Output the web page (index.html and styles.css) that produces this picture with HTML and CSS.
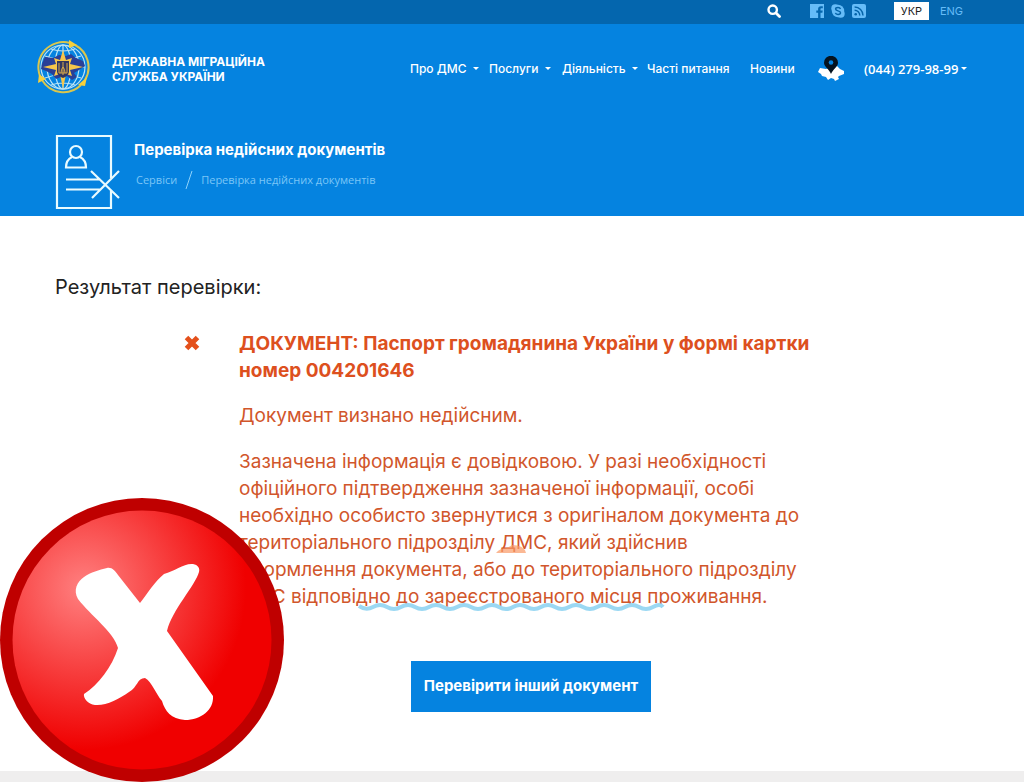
FILE: index.html
```
<!DOCTYPE html>
<html lang="uk">
<head>
    <meta charset="UTF-8">
    <meta name="viewport" content="width=device-width, initial-scale=1.0">
    <title>Перевірка недійсних документів</title>
    <link rel="stylesheet" href="styles.css">
</head>
<body>

    <!-- Top bar -->
    <div class="topbar">
        <button class="search" type="button" aria-label="Пошук">
            <svg width="14" height="14" viewBox="0 0 14 14"><circle cx="5.7" cy="5.7" r="4.2" fill="none" stroke="#fff" stroke-width="2.4"/><path d="M9 9l3.5 3.5" stroke="#fff" stroke-width="2.8" stroke-linecap="round"/></svg>
        </button>
        <div class="social">
            <a href="#" aria-label="Facebook">
                <svg width="14" height="14" viewBox="0 0 14 14"><path d="M0 0h14v14h-3.500V8.700h1.900l.3-2.200h-2.200V5.200c0-.7.300-1 1.100-1h1.200V2.200H11C9 2.200 8.100 3.300 8.100 5v1.500H6.300v2.200h1.800V14H0z" fill="#66bcf8"/></svg>
            </a>
            <a href="#" aria-label="Skype">
                <svg width="14" height="14" viewBox="0 0 14 14"><circle cx="4.300" cy="4.300" r="4" fill="#66bcf8"/><circle cx="9.700" cy="9.700" r="4" fill="#66bcf8"/><circle cx="7" cy="7" r="6.200" fill="#66bcf8"/><path d="M9.500 4.900C9.100 3.800 8.100 3.500 7 3.500c-1.400 0-2.400.6-2.400 1.600C4.600 7.400 9.500 6.300 9.500 8.800c0 1.100-1.100 1.700-2.500 1.700-1.300 0-2.300-.5-2.600-1.600" fill="none" stroke="#0463a8" stroke-width="1.500"/></svg>
            </a>
            <a href="#" aria-label="RSS">
                <svg width="14" height="14" viewBox="0 0 14 14"><rect width="14" height="14" rx="2" fill="#66bcf8"/><circle cx="3.700" cy="10.300" r="1.300" fill="#0463a8"/><path d="M2.600 6.200a5.200 5.200 0 0 1 5.200 5.200M2.600 3a8.400 8.400 0 0 1 8.400 8.400" fill="none" stroke="#0463a8" stroke-width="1.400"/></svg>
            </a>
        </div>
        <div class="lang">
            <a class="active" href="#">УКР</a>
            <a href="#">ENG</a>
        </div>
    </div>

    <!-- Header -->
    <header class="header">
        <div class="header-row">
            <a class="logo" href="#">
                <svg width="54" height="56" viewBox="0 0 54 56">
                    <g fill="none" stroke="#b9e3f5" stroke-width="1.200">
                        <circle cx="27" cy="28" r="22"/>
                        <ellipse cx="27" cy="28" rx="8" ry="22"/>
                        <ellipse cx="27" cy="28" rx="16" ry="22"/>
                        <path d="M27 6v44M5 28h44M9 17q18 7 36 0M9 39q18-7 36 0M15 10q12 4 24 0M15 46q12-4 24 0"/>
                    </g>
                    <path d="M6 25l3-7 8 1 6-3 7 1 5-2 5 4 7 3 2 5-6 4-5 3 3 4-5 3-5-4-6 1-5 2-4-5-6-3-5-2z" fill="#2a3f97"/>
                    <g fill="none" stroke="#d9c64e" stroke-width="2">
                        <path d="M4 37A25 25 0 0 1 34 4"/>
                        <path d="M39 6A25 25 0 0 1 49 41"/>
                        <path d="M45 46A25 25 0 0 1 6 41"/>
                    </g>
                    <path d="M33 1l8 5-8 3zM51 38l-2 9-7-1zM2 44l1-9 7 5z" fill="#f7d03c"/>
                    <path d="M27 11l3 10 6-2-2 6 13 3-13 3 2 6-6-2-3 15-3-15-6 2 2-6-13-3 13-3-2-6 6 2z" fill="#f7c64a"/>
                    <path d="M21 22h12v11q-1 4-6 6-5-2-6-6z" fill="#32355f"/>
                    <path d="M23 24v10h8V24M27 23v13M25 34q0-4 2-6 2 2 2 6" fill="none" stroke="#d9aa4b" stroke-width="1"/>
                </svg>
                <span>ДЕРЖАВНА МІГРАЦІЙНА<br>СЛУЖБА УКРАЇНИ</span>
            </a>
            <nav class="nav">
                <a class="drop" href="#">Про ДМС</a>
                <a class="drop" href="#">Послуги</a>
                <a class="drop" href="#">Діяльність</a>
                <a href="#">Часті питання</a>
                <a href="#">Новини</a>
                <a class="map" href="#" aria-label="Карта">
                    <svg width="26" height="26" viewBox="0 0 26 26"><path d="M0 16l2-4 6 1 5-2 6-1 3 3 4 2v3l-5 2-1 1 1 2-4 2-1-2-3-1-3 2-2-3-4-1-1-2z" fill="#fff"/><path d="M13 18C11 13 6 11 6 6.800a7 7 0 0 1 14 0C20 11 15 13 13 18z" fill="#05131f"/><circle cx="13" cy="6.500" r="2.300" fill="#0583e0"/></svg>
                </a>
                <a class="drop phone" href="#">(044) 279-98-99</a>
            </nav>
        </div>

        <div class="title-row">
            <svg width="66" height="76" viewBox="0 0 66 76" fill="none" stroke="#e9fbff" stroke-width="2.200">
                <path d="M56 44V2H2v72h54V57"/>
                <circle cx="21" cy="18" r="6"/>
                <path d="M17 23c-4 2-6 5-6 10.500h20c0-5.500-2-8.500-6-10.500"/>
                <path d="M11 45.500h34M11 55.500h34M36 37l28 27M64 37L37 64"/>
            </svg>
            <div>
                <h1>Перевірка недійсних документів</h1>
                <div class="crumbs">
                    <a href="#">Сервіси</a>
                    <svg width="8" height="18" viewBox="0 0 8 18"><path d="M7 0L1 18" stroke="#8fd3fb"/></svg>
                    <a href="#">Перевірка недійсних документів</a>
                </div>
            </div>
        </div>
    </header>

    <!-- Result -->
    <main class="content">
        <h2>Результат перевірки:</h2>
        <div class="result">
            <svg class="cross" width="16" height="16" viewBox="0 0 16 16"><path d="M2.500 2.500l11 11M13.500 2.500l-11 11" stroke="#e4501b" stroke-width="5"/></svg>
            <div class="result-text">
                <p class="doc">ДОКУМЕНТ: Паспорт громадянина України у формі картки номер 004201646</p>
                <p>Документ визнано недійсним.</p>
                <div class="note">
                    <p>Зазначена інформація є довідковою. У разі необхідності<br>офіційного підтвердження зазначеної інформації, особі<br>необхідно особисто звернутися з оригіналом документа до<br>територіального підрозділу ДМС, який здійснив<br>оформлення документа, або до територіального підрозділу<br>ДМС відповідно до зареєстрованого місця проживання.</p>
                    <svg class="watermark" width="308" height="76" viewBox="0 0 308 76">
                        <path d="M138 15q4-5 11-5l5-3q12 0 14 8z" fill="#fa9a66" opacity=".7"/>
                        <path d="M1 68q7 5 14 1t14 0 14 0 14 0 14 0 14 0 14 0 14 0 14 0 14 0 14 0 14 0 14 0 14 0 14 0 14 0 14 0 14 0 14 0 14 0 14 0 10 0" fill="none" stroke="#9bd8f3" stroke-width="4"/>
                    </svg>
                </div>
            </div>
        </div>
        <button class="btn" type="button">Перевірити інший документ</button>
    </main>

    <footer class="footer"></footer>

    <!-- Invalid badge -->
    <svg class="badge" width="284" height="284" viewBox="0 0 284 284">
        <defs>
            <radialGradient id="red" cx="84" cy="90" r="162" gradientUnits="userSpaceOnUse">
                <stop offset="0" stop-color="#ff8080"/>
                <stop offset="1" stop-color="#f00000"/>
            </radialGradient>
        </defs>
        <circle cx="142" cy="142" r="142" fill="#bf0000"/>
        <circle cx="142" cy="142" r="129.500" fill="url(#red)"/>
        <path d="M107 70C112 69 115 73 118 77L140 105C147 96 155 83 164 76C175 73 184 65 193 66C198 67 200 70 199 74C195 88 172 112 167 133L213 198C214 212 201 222 185 222C171 221 165 213 162 203C156 196 152 184 145 180C137 180 138 189 129 194C119 201 106 208 95 207C88 206 83 200 84 196C98 187 112 169 118 150C114 134 91 118 78 101C73 92 77 84 84 79C91 74 99 72 107 70Z" fill="#fff"/>
    </svg>

</body>
</html>
```
FILE: styles.css
```
* {
    box-sizing: border-box;
}
body {
    display: flex;
    flex-direction: column;
    position: relative;
    min-height: 100vh;
    margin: 0;
    background: #fff;
    font-family: Inter, "Open Sans", sans-serif;
}
a {
    color: inherit;
    text-decoration: none;
}
svg {
    display: block;
    flex-shrink: 0;
}
h1, h2, p {
    margin: 0;
}
/* Top bar */
.topbar {
    display: flex;
    justify-content: flex-end;
    align-items: center;
    height: 24px;
    padding: 0 61px 2px 0;
    background: #0466ae;
}
.search {
    padding: 0;
    border: none;
    background: none;
    cursor: pointer;
}
.social {
    display: flex;
    gap: 7px;
    margin: 0 28px 0 29px;
}
.lang {
    display: flex;
    gap: 11px;
    font-size: 11px;
    line-height: 18px;
    color: #66bcf8;
}
.lang .active {
    width: 35px;
    background: #fff;
    color: #222;
    text-align: center;
}
/* Header */
.header {
    height: 192px;
    background: #0583e0;
    color: #fff;
}
.header-row {
    display: flex;
    justify-content: space-between;
    align-items: center;
    padding: 15px 57px 0 36px;
}
.logo {
    display: flex;
    align-items: center;
    gap: 22px;
    font-size: 12px;
    font-weight: bold;
    line-height: 15px;
}
.logo span {
    padding-top: 4px;
}
.nav {
    display: grid;
    grid-template-columns: 79px 73px 85px 103px 68px 46px 103px;
    align-items: center;
    padding-top: 3px;
    font-size: 12px;
    font-weight: 500;
    line-height: 18px;
    white-space: nowrap;
}
.drop {
    display: flex;
    align-items: center;
    gap: 6px;
}
.drop::after {
    content: "";
    border: 3px solid transparent;
    border-top-color: #fff;
    border-bottom: none;
}
.phone {
    gap: 3px;
    font-family: "Open Sans", sans-serif;
    font-size: 13px;
    font-weight: 600;
}
.title-row {
    display: flex;
    gap: 13px;
    padding: 39px 55px 0;
}
.title-row h1 {
    margin-top: 5px;
    font-size: 15px;
    line-height: 22px;
}
.crumbs {
    display: flex;
    align-items: center;
    gap: 8px;
    margin: 10px 0 0 2px;
    font-family: "Open Sans", sans-serif;
    font-size: 11px;
    line-height: 18px;
    color: #7cc6f7;
}
/* Result */
.content {
    flex: 1;
    padding: 57px 55px 59px;
}
.content h2 {
    font-size: 20px;
    font-weight: normal;
    line-height: 28px;
    color: #222;
}
.result {
    display: flex;
    gap: 39px;
    padding: 29px 129px 0;
    color: #d1562b;
}
.cross {
    margin-top: 5px;
}
.result-text {
    max-width: 600px;
    font-size: 19px;
    line-height: 27px;
}
.result-text p {
    margin-bottom: 19px;
    white-space: nowrap;
}
.result-text .doc {
    margin-bottom: 18px;
    font-weight: bold;
    color: #dd501e;
    white-space: normal;
}
.result-text .note p {
    margin-bottom: 0;
}
.note {
    position: relative;
}
.watermark {
    position: absolute;
    left: 119px;
    bottom: -4px;
}
.btn {
    display: block;
    width: 240px;
    height: 51px;
    margin: 51px 0 0 356px;
    padding: 0 0 3px;
    border: none;
    background: #0583e0;
    color: #fff;
    font-family: inherit;
    font-size: 15px;
    font-weight: bold;
    cursor: pointer;
}
.footer {
    height: 11px;
    background: #efeeee;
}
/* Badge */
.badge {
    position: absolute;
    left: 0;
    bottom: 0;
}
```
